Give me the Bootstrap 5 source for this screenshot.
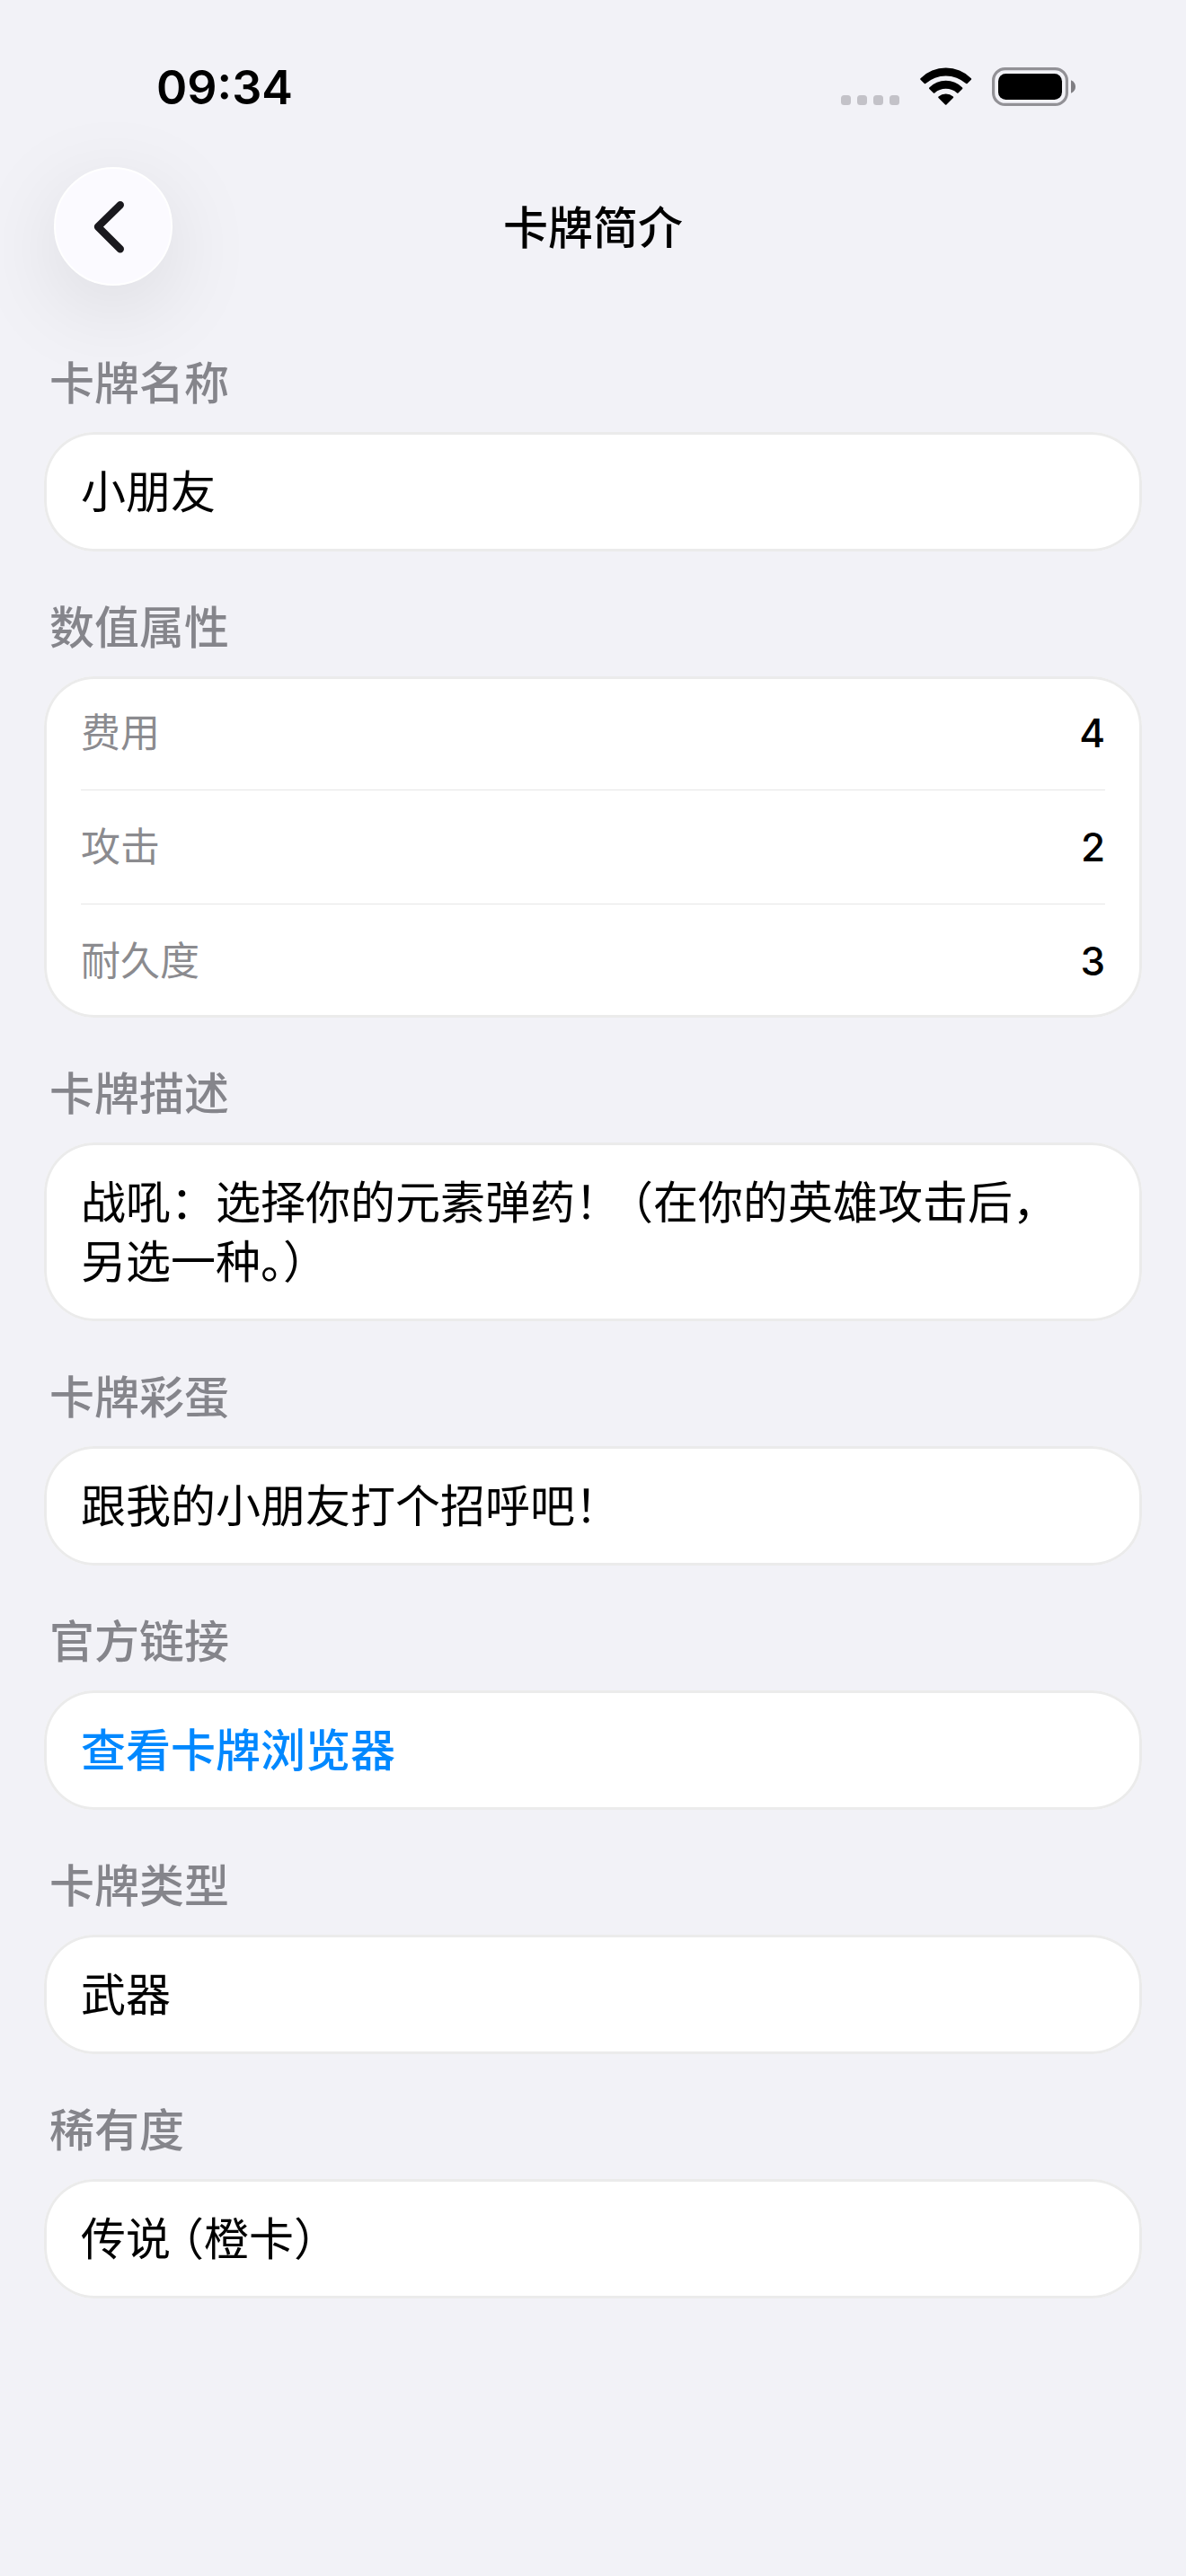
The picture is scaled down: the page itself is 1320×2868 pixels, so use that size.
<!DOCTYPE html>
<html lang="zh-CN">
<head>
<meta charset="utf-8">
<meta name="viewport" content="width=device-width, initial-scale=1">
<title>卡牌简介</title>
<link href="https://cdn.jsdelivr.net/npm/bootstrap@5.3.0/dist/css/bootstrap.min.css" rel="stylesheet">
<style>
  body {
    background: #f2f2f7;
    color: #000;
    font-family: Inter, "Noto Sans CJK SC", sans-serif;
    font-size: 50px;
    line-height: 66px;
  }
  .status-bar { height: 186px; padding: 10px 122px 0 174px; }
  .status-time { font-size: 52px; font-weight: 600; }
  .status-icons { gap: 22px; padding-bottom: 3px; }
  .title-bar { display: grid; grid-template-columns: 1fr auto 1fr; padding: 0 60px; }
  .page-title { font-size: 50px; line-height: 66px; font-weight: 500; }
  .back-btn {
    width: 132px;
    height: 132px;
    background: #fbfaff;
    border: 2px solid #fff;
    box-shadow: 0 24px 100px rgba(0, 0, 0, .1);
  }
  .detail-list { padding: 24px 49px; }
  .detail-section { padding-top: 52px; }
  .section-label {
    margin: 0 0 21px;
    padding: 0 6px;
    font-size: 50px;
    line-height: 66px;
    font-weight: 500;
    color: rgba(60, 60, 67, .6);
  }
  .panel {
    background: #fff;
    border-radius: 56px;
    box-shadow: inset 0 0 0 3px #ebebeb;
    padding: 0 41px;
  }
  .panel-text { margin: 0; padding: 34px 0 33px; }
  .panel-link { color: #08f; font-weight: 500; text-decoration: none; }
  .stat-row { height: 126px; font-size: 44px; }
  .stat-row + .stat-row { border-top: 1px solid #e6e6e6; height: 127px; }
  .stat-name { color: rgba(60, 60, 67, .6); font-weight: 400; }
  .stat-value { margin: 0; font-weight: 500; }
  .half { font-feature-settings: "halt"; }
  .half-open { padding-left: 12px; }
</style>
<script src="https://cdn.jsdelivr.net/npm/bootstrap@5.3.0/dist/js/bootstrap.bundle.min.js"></script>
</head>
<body>
<div class="status-bar d-flex align-items-center justify-content-between">
  <time class="status-time">09:34</time>
  <div class="status-icons d-flex align-items-center">
    <svg width="66" height="43" viewBox="0 0 66 43" fill="#c3c2c8" aria-hidden="true">
      <rect x="0" y="31" width="11" height="11" rx="3.5"/>
      <rect x="18" y="31" width="11" height="11" rx="3.5"/>
      <rect x="36" y="31" width="11" height="11" rx="3.5"/>
      <rect x="54" y="31" width="11" height="11" rx="3.5"/>
    </svg>
    <svg width="58" height="43" viewBox="0 0 58 43" aria-hidden="true">
      <path d="M0.5 12.2A40 40 0 0 1 56.900 12.200Q57.600 13 56.900 13.700L52.600 18Q51.900 18.600 51.200 18A34 34 0 0 0 6.200 18Q5.500 18.600 4.800 18L.5 13.700Q-.2 13 .5 12.200Z"/>
      <path d="M10.300 22.500A26 26 0 0 1 47.100 22.500Q47.800 23.200 47.100 23.900L42.500 28.400Q41.800 29 41.100 28.400A19 19 0 0 0 16.300 28.400Q15.600 29 14.900 28.400L10.300 23.900Q9.600 23.200 10.300 22.500Z"/>
      <path d="M20.500 32.400A13 13 0 0 1 36.900 32.400Q37.600 33.200 36.900 33.900L29.400 41.500Q28.700 42.200 28 41.500L20.500 33.900Q19.800 33.200 20.500 32.400Z"/>
    </svg>
    <svg width="94" height="43" viewBox="0 0 94 43" aria-hidden="true">
      <rect x="1.6" y="1.6" width="81.800" height="39.800" rx="13" fill="none" stroke="#929196" stroke-width="3.200"/>
      <rect x="7" y="7" width="71" height="29" rx="8.500"/>
      <path d="M88 14.300Q93 16.500 93 21.500T88 28.700Z" fill="#7f7e82"/>
    </svg>
  </div>
</div>

<header class="title-bar align-items-center">
  <button type="button" class="back-btn rounded-circle p-0 d-flex align-items-center justify-content-center" aria-label="返回">
    <svg width="128" height="128" viewBox="2 2 128 128" fill="none" stroke="#1a191e" stroke-width="8.400" stroke-linecap="round" stroke-linejoin="round" aria-hidden="true"><path d="M73.800 42.200 49 66.500 73.800 91.300"/></svg>
  </button>
  <h1 class="page-title m-0 pt-1 text-center">卡牌简介</h1>
</header>

<main class="detail-list">
  <section class="detail-section">
    <h2 class="section-label">卡牌名称</h2>
    <div class="panel"><p class="panel-text">小朋友</p></div>
  </section>
  <section class="detail-section">
    <h2 class="section-label">数值属性</h2>
    <dl class="panel m-0">
      <div class="stat-row d-flex align-items-center justify-content-between"><dt class="stat-name">费用</dt><dd class="stat-value">4</dd></div>
      <div class="stat-row d-flex align-items-center justify-content-between"><dt class="stat-name">攻击</dt><dd class="stat-value">2</dd></div>
      <div class="stat-row d-flex align-items-center justify-content-between"><dt class="stat-name">耐久度</dt><dd class="stat-value">3</dd></div>
    </dl>
  </section>
  <section class="detail-section">
    <h2 class="section-label">卡牌描述</h2>
    <div class="panel"><p class="panel-text">战吼：选择你的元素弹药！<span class="half half-open">（</span>在你的英雄攻击后，<br>另选一种<span class="half">。）</span></p></div>
  </section>
  <section class="detail-section">
    <h2 class="section-label">卡牌彩蛋</h2>
    <div class="panel"><p class="panel-text">跟我的小朋友打个招呼吧！</p></div>
  </section>
  <section class="detail-section">
    <h2 class="section-label">官方链接</h2>
    <div class="panel"><p class="panel-text"><a class="panel-link" href="#">查看卡牌浏览器</a></p></div>
  </section>
  <section class="detail-section">
    <h2 class="section-label">卡牌类型</h2>
    <div class="panel"><p class="panel-text">武器</p></div>
  </section>
  <section class="detail-section">
    <h2 class="section-label">稀有度</h2>
    <div class="panel"><p class="panel-text">传说<span class="half half-open">（</span>橙卡<span class="half">）</span></p></div>
  </section>
</main>
</body>
</html>
